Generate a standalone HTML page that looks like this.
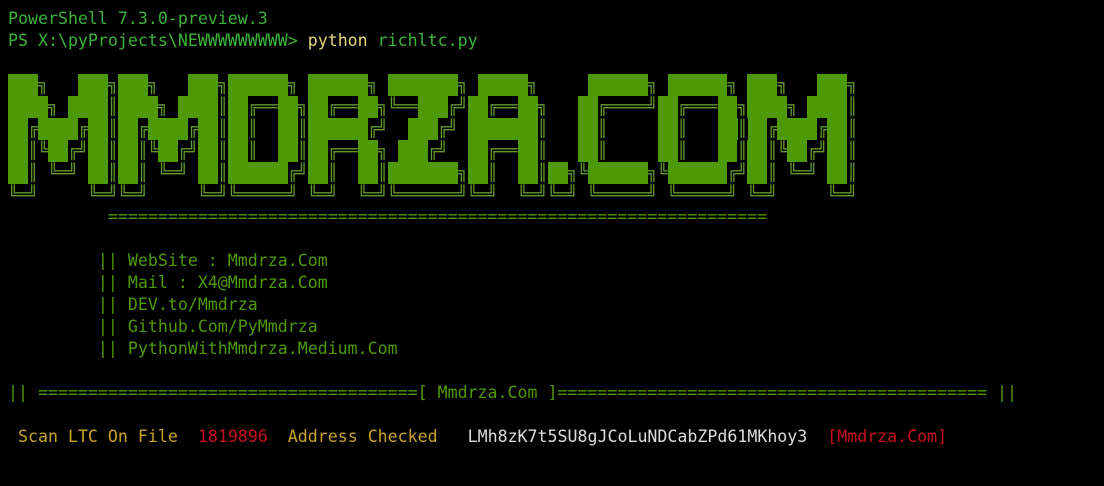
<!DOCTYPE html>
<html><head><meta charset="utf-8"><style>
html,body{margin:0;padding:0;background:#000;width:1104px;height:486px;overflow:hidden}
pre{margin:0;padding:8px 0 0 8px;font-family:"DejaVu Sans Mono","Liberation Mono",monospace;font-size:16.6px;line-height:22px;color:#4e9a06;white-space:pre}
b{display:inline-block;height:22px;vertical-align:top;background:#4e9a06;color:transparent;font-weight:normal}
.a{color:#5f9a2a}
.g{color:#3cb43c}.y{color:#e6d67a}.o{color:#c9a227}.r{color:#c50f1f}.w{color:#dcdcdc}
</style></head><body>
<pre id="t"><span class="g">PowerShell 7.3.0-preview.3</span>
<span class="g">PS X:\pyProjects\NEWWWWWWWWW&gt; </span><span class="y">python</span> <span class="g">richltc.py</span>

<span class="a">███╗   ███╗███╗   ███╗██████╗ ██████╗ ███████╗ █████╗     ██████╗ ██████╗ ███╗   ███╗</span>
<span class="a">████╗ ████║████╗ ████║██╔══██╗██╔══██╗╚══███╔╝██╔══██╗   ██╔════╝██╔═══██╗████╗ ████║</span>
<span class="a">██╔████╔██║██╔████╔██║██║  ██║██████╔╝  ███╔╝ ███████║   ██║     ██║   ██║██╔████╔██║</span>
<span class="a">██║╚██╔╝██║██║╚██╔╝██║██║  ██║██╔══██╗ ███╔╝  ██╔══██║   ██║     ██║   ██║██║╚██╔╝██║</span>
<span class="a">██║ ╚═╝ ██║██║ ╚═╝ ██║██████╔╝██║  ██║███████╗██║  ██║██╗╚██████╗╚██████╔╝██║ ╚═╝ ██║</span>
<span class="a">╚═╝     ╚═╝╚═╝     ╚═╝╚═════╝ ╚═╝  ╚═╝╚══════╝╚═╝  ╚═╝╚═╝ ╚═════╝ ╚═════╝ ╚═╝     ╚═╝</span>
          ==================================================================

         || WebSite : Mmdrza.Com
         || Mail : X4@Mmdrza.Com
         || DEV.to/Mmdrza
         || Github.Com/PyMmdrza
         || PythonWithMmdrza.Medium.Com

|| ======================================[ Mmdrza.Com ]=========================================== ||

 <span class="o">Scan LTC On File</span>  <span class="r">1819896</span>  <span class="o">Address Checked</span>   <span class="w">LMh8zK7t5SU8gJCoLuNDCabZPd61MKhoy3</span>  <span class="r">[Mmdrza.Com]</span></pre>
<script>
document.querySelectorAll('.a').forEach(function(e){e.innerHTML=e.textContent.replace(/█+/g,function(m){return '<b>'+m+'</b>';});});
</script>
</body></html>
